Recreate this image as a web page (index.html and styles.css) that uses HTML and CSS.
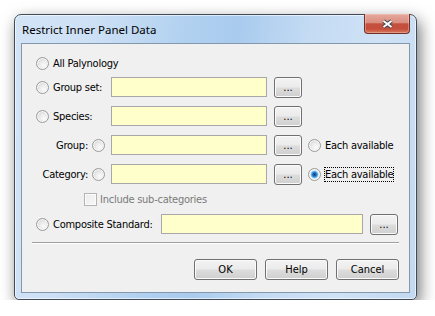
FILE: index.html
```html
<!DOCTYPE html>
<html lang="en">

<head>
    <meta charset="UTF-8" />
    <title>Restrict Inner Panel Data</title>
    <link rel="stylesheet" href="styles.css">
</head>

<body>

    <!-- Dialog window -->
    <div class="window">
        <div class="titlebar">
            <span class="title">Restrict Inner Panel Data</span>
            <button class="close-btn" aria-label="Close">
                <svg width="13" height="10" viewBox="0 0 13 10">
                    <path d="M2.5 2 L10.5 8 M10.5 2 L2.5 8" stroke="#3d4550" stroke-width="4" fill="none" />
                    <path d="M2.5 2 L10.5 8 M10.5 2 L2.5 8" stroke="#fff" stroke-width="2" fill="none" />
                </svg>
            </button>
        </div>

        <div class="client">
            <div class="rows">
                <div class="row row-first">
                    <span class="radio"></span>
                    <span class="lbl">All Palynology</span>
                </div>

                <div class="row">
                    <div class="lbl-block">
                        <span class="radio"></span>
                        <span class="lbl">Group set:</span>
                    </div>
                    <div class="field"></div>
                    <button class="dots-btn">...</button>
                </div>

                <div class="row">
                    <div class="lbl-block">
                        <span class="radio"></span>
                        <span class="lbl">Species:</span>
                    </div>
                    <div class="field"></div>
                    <button class="dots-btn">...</button>
                </div>

                <div class="row">
                    <div class="lbl-block right">
                        <span class="lbl">Group:</span>
                        <span class="radio"></span>
                    </div>
                    <div class="field"></div>
                    <button class="dots-btn">...</button>
                    <div class="opt">
                        <span class="radio"></span>
                        <span class="lbl">Each available</span>
                    </div>
                </div>

                <div class="row">
                    <div class="lbl-block right">
                        <span class="lbl">Category:</span>
                        <span class="radio"></span>
                    </div>
                    <div class="field"></div>
                    <button class="dots-btn">...</button>
                    <div class="opt">
                        <span class="radio on"></span>
                        <span class="lbl focus">Each available</span>
                    </div>
                </div>

                <div class="row row-check">
                    <span class="check"></span>
                    <span class="lbl disabled">Include sub-categories</span>
                </div>

                <div class="row">
                    <div class="lbl-block wide">
                        <span class="radio"></span>
                        <span class="lbl">Composite Standard:</span>
                    </div>
                    <div class="field long"></div>
                    <button class="dots-btn">...</button>
                </div>
            </div>

            <div class="sep"></div>

            <div class="actions">
                <button class="btn">OK</button>
                <button class="btn">Help</button>
                <button class="btn">Cancel</button>
            </div>
        </div>
    </div>

</body>

</html>
```

FILE: styles.css
```css
* {
    box-sizing: border-box;
}

body {
    margin: 0;
    background: #fff;
    font-family: 'DejaVu Sans Condensed', 'DejaVu Sans', sans-serif;
    font-size: 11px;
    color: #000;
}

/* window frame */
.window {
    width: 403px;
    height: 286px;
    margin: 14px 0 0 14px;
    padding: 0 6px 6px;
    display: flex;
    flex-direction: column;
    border: 1px solid #414b57;
    border-radius: 7px 7px 5px 5px;
    background: linear-gradient(100deg, #d3e4f6 0%, #cde0f5 18%, #b2d1f0 38%, #a9cbee 50%, #c4dbf3 66%, #cfe2f6 82%, #c2d9f1 100%);
    box-shadow: inset 0 0 0 1px rgba(255, 255, 255, 0.6), 3px 6px 16px rgba(0, 0, 0, 0.55);
}

.titlebar {
    height: 28px;
    display: flex;
    align-items: center;
    justify-content: space-between;
}

.title {
    padding-left: 1px;
    font-family: 'Noto Sans', sans-serif;
    font-size: 11.5px;
    color: #000;
}

.close-btn {
    align-self: flex-start;
    margin-top: -1px;
    width: 46px;
    height: 20px;
    padding: 0;
    display: flex;
    align-items: center;
    justify-content: center;
    border: 1px solid #73302a;
    border-top: none;
    border-radius: 0 0 4px 4px;
    background: linear-gradient(#e7a99d 0%, #d98e80 45%, #c4503f 52%, #c54e3b 78%, #d87a5e 100%);
    box-shadow: inset 0 0 0 1px rgba(255, 220, 210, 0.35);
}

/* client area */
.client {
    height: 250px;
    padding: 13px 10px 0;
    border: 1px solid #8397ad;
    background: #f0f0f0;
}

.rows {
    display: flex;
    flex-direction: column;
    gap: 8px;
    padding-left: 4px;
}

.row {
    height: 21px;
    display: flex;
    align-items: center;
}

.row-first {
    height: 13px;
    gap: 4px;
    margin-bottom: -1px;
}

.row-check {
    height: 13px;
    padding-left: 48px;
    gap: 3px;
}

.lbl {
    white-space: nowrap;
    line-height: 13px;
    letter-spacing: -0.25px;
}

.lbl.disabled {
    color: #7a7a7a;
}

.lbl.focus {
    margin-left: -1px;
    border: 1px dotted #000;
}

.lbl-block {
    width: 75px;
    height: 21px;
    flex: none;
    display: flex;
    align-items: center;
    gap: 4px;
}

.lbl-block.right {
    justify-content: flex-end;
    padding-right: 6px;
}

.lbl-block.wide {
    width: 125px;
}

.radio {
    width: 13px;
    height: 13px;
    flex: none;
    border-radius: 50%;
    border: 1px solid #9a9b9b;
    background: radial-gradient(circle at 62% 66%, #fbfbfb 0, #ebebeb 40%, #d6d6d6 80%);
    box-shadow: inset 0 0 0 1px #f7f7f7;
}

.radio.on {
    background: radial-gradient(circle at 50% 50%, #0c3f78 0, #1c66ad 1.6px, #3f98dc 2.6px, #79c1f0 3.4px, #e4eef5 4.2px, #ececec 5px);
}

.check {
    width: 13px;
    height: 13px;
    flex: none;
    border: 1px solid #b4b4b4;
    background: linear-gradient(135deg, #ececec, #f8f8f8);
    box-shadow: inset 0 0 0 1px #fbfbfb;
}

.field {
    align-self: flex-start;
    width: 156px;
    height: 20px;
    flex: none;
    border: 1px solid #a8a8a8;
    background: #ffffcc;
}

.field.long {
    width: 202px;
}

button {
    font-family: inherit;
    font-size: 11px;
    color: #000;
}

.dots-btn,
.btn {
    height: 21px;
    padding: 0;
    border: 1px solid #707070;
    border-radius: 3px;
    background: linear-gradient(#f3f3f3 0%, #ebebeb 48%, #dddddd 52%, #cfcfcf 100%);
    box-shadow: inset 0 0 0 1px #fbfbfb;
}

.dots-btn {
    width: 28px;
    margin-left: 7px;
    flex: none;
}

.opt {
    margin-left: 6px;
    display: flex;
    align-items: center;
    gap: 4px;
}

.sep {
    height: 2px;
    margin-top: 7px;
    border-top: 1px solid #a0a0a0;
    border-bottom: 1px solid #fff;
}

.actions {
    margin-top: 15px;
    display: flex;
    justify-content: flex-end;
    gap: 8px;
}

.btn {
    width: 63px;
}
```
